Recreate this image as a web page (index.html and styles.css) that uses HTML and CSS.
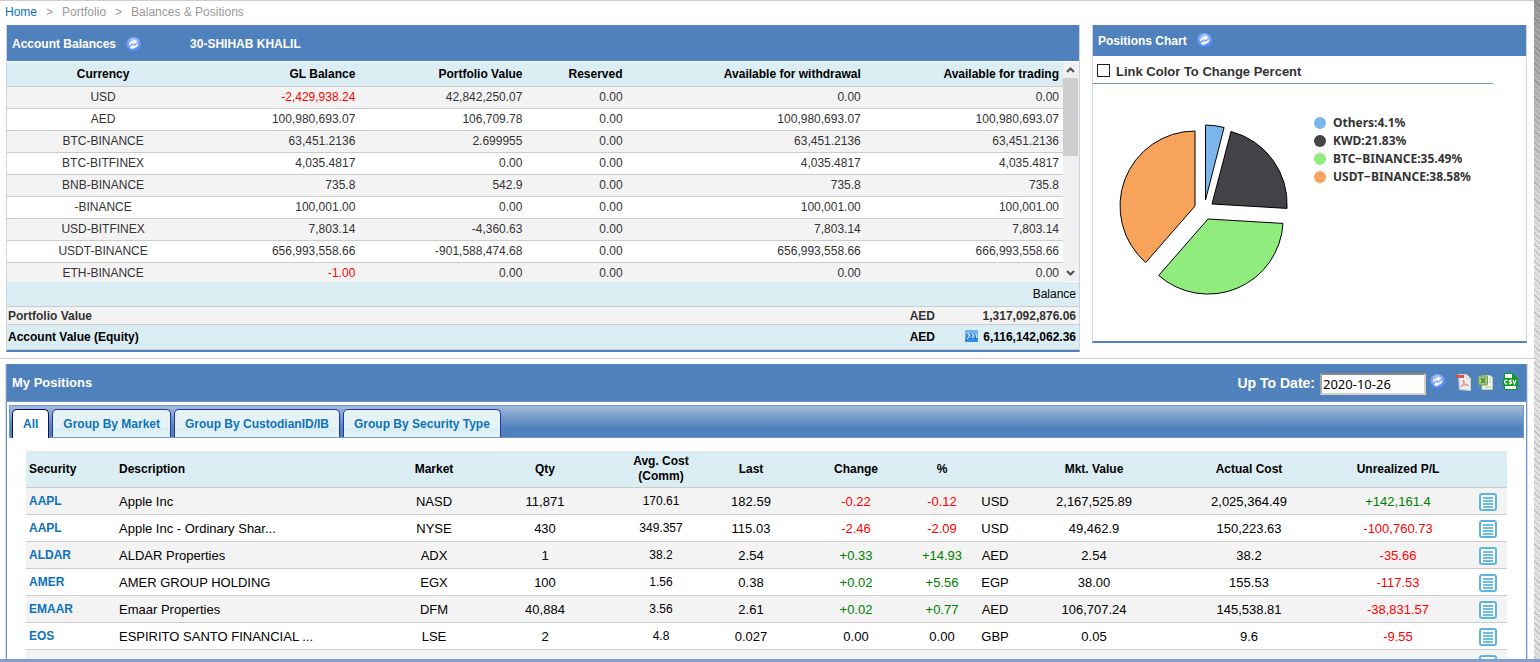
FILE: index.html
```html
<!DOCTYPE html>
<html lang="en">

<head>
    <meta charset="UTF-8">
    <meta name="viewport" content="width=device-width, initial-scale=1.0">
    <title>Balances &amp; Positions</title>

    <link rel="stylesheet" href="styles.css">
</head>

<body>
    <!-- shared icons -->
    <svg class="sprite" width="0" height="0" aria-hidden="true">
        <defs>
            <radialGradient id="ball" cx="0.5" cy="0.25" r="0.8">
                <stop offset="0" stop-color="#b5caff" />
                <stop offset="0.5" stop-color="#7fa4f6" />
                <stop offset="1" stop-color="#3f75ee" />
            </radialGradient>
            <symbol id="refresh" viewBox="0 0 15 15">
                <circle cx="7.5" cy="7.5" r="7.3" fill="url(#ball)" />
                <g transform="rotate(-22 7.5 7.5)" fill="#fff">
                    <path d="M2.800 7.200C3.200 4.400 6 3.400 8.800 4.200L9.400 2.800L12.400 6L8.200 7.400L8.500 6.200C6.500 5.600 4.600 5.800 2.800 7.200Z" />
                    <path d="M12.200 7.800C11.800 10.600 9 11.600 6.200 10.800L5.600 12.200L2.600 9L6.800 7.600L6.500 8.800C8.500 9.400 10.400 9.200 12.200 7.800Z" />
                </g>
            </symbol>
            <symbol id="list" viewBox="0 0 18 18">
                <rect x="1" y="1" width="16" height="16" rx="2" fill="#fff" stroke="#5bb5e0" stroke-width="2" />
                <path d="M4 5h10M4 8h10M4 11h10M4 14h10" stroke="#3fa9d8" stroke-width="1.300" />
            </symbol>
        </defs>
    </svg>

    <div class="page">
        <nav class="breadcrumb">
            <a href="#">Home</a><i>&gt;</i><span>Portfolio</span><i>&gt;</i><span>Balances &amp; Positions</span>
        </nav>

        <div class="top">
            <div class="panel balances">
                <div class="title">
                    <b>Account Balances</b>
                    <button class="icon" aria-label="Refresh balances"><svg width="15" height="15"><use href="#refresh" /></svg></button>
                    <b class="account">30-SHIHAB KHALIL</b>
                </div>
                <div class="scroller">
                    <table class="grid">
                        <colgroup>
                            <col class="cur"><col class="gl"><col class="pv"><col class="res"><col class="wd"><col class="tr">
                        </colgroup>
                        <thead>
                            <tr><th>Currency</th><th>GL Balance</th><th>Portfolio Value</th><th>Reserved</th><th>Available for withdrawal</th><th>Available for trading</th></tr>
                        </thead>
                        <tbody>
                            <tr><td>USD</td><td class="red">-2,429,938.24</td><td>42,842,250.07</td><td>0.00</td><td>0.00</td><td>0.00</td></tr>
                            <tr><td>AED</td><td>100,980,693.07</td><td>106,709.78</td><td>0.00</td><td>100,980,693.07</td><td>100,980,693.07</td></tr>
                            <tr><td>BTC-BINANCE</td><td>63,451.2136</td><td>2.699955</td><td>0.00</td><td>63,451.2136</td><td>63,451.2136</td></tr>
                            <tr><td>BTC-BITFINEX</td><td>4,035.4817</td><td>0.00</td><td>0.00</td><td>4,035.4817</td><td>4,035.4817</td></tr>
                            <tr><td>BNB-BINANCE</td><td>735.8</td><td>542.9</td><td>0.00</td><td>735.8</td><td>735.8</td></tr>
                            <tr><td>-BINANCE</td><td>100,001.00</td><td>0.00</td><td>0.00</td><td>100,001.00</td><td>100,001.00</td></tr>
                            <tr><td>USD-BITFINEX</td><td>7,803.14</td><td>-4,360.63</td><td>0.00</td><td>7,803.14</td><td>7,803.14</td></tr>
                            <tr><td>USDT-BINANCE</td><td>656,993,558.66</td><td>-901,588,474.68</td><td>0.00</td><td>656,993,558.66</td><td>666,993,558.66</td></tr>
                            <tr><td>ETH-BINANCE</td><td class="red">-1.00</td><td>0.00</td><td>0.00</td><td>0.00</td><td>0.00</td></tr>
                        </tbody>
                    </table>
                    <div class="scrollbar">
                        <svg width="15" height="16"><path d="M4 10l3.500-3.500L11 10" /></svg>
                        <div class="thumb"></div>
                        <svg width="15" height="16"><path d="M4 6l3.500 3.500L11 6" /></svg>
                    </div>
                </div>
                <table class="totals">
                    <thead>
                        <tr><th></th><th></th><th>Balance</th></tr>
                    </thead>
                    <tbody>
                        <tr><td>Portfolio Value</td><td>AED</td><td>1,317,092,876.06</td></tr>
                        <tr class="equity">
                            <td>Account Value (Equity)</td>
                            <td>AED</td>
                            <td>
                                <svg width="13" height="12" viewBox="0 0 13 12">
                                    <rect width="13" height="12" rx="1" fill="#6db4ee" />
                                    <rect y="8" width="13" height="4" rx="1" fill="#2f8be6" />
                                    <path d="M1 4l2 2-2 2M5 4l2 2-2 3M9 4l2 2-1 3" fill="none" stroke="#1e5fc4" />
                                    <path d="M3 3l2 3M7 8l2-4M11 4l1 4M2 9l2-2" stroke="#d4ecff" />
                                </svg>
                                6,116,142,062.36
                            </td>
                        </tr>
                    </tbody>
                </table>
            </div>

            <div class="panel chart">
                <div class="title">
                    <b>Positions Chart</b>
                    <button class="icon" aria-label="Refresh chart"><svg width="15" height="15"><use href="#refresh" /></svg></button>
                </div>
                <div class="option">
                    <input type="checkbox" id="linkColor">
                    <label for="linkColor">Link Color To Change Percent</label>
                </div>
                <div class="plot">
                    <svg width="180" height="180" viewBox="1113 119 180 180" stroke="#000" stroke-linejoin="round">
                        <path d="M1205.500 200V125A75 75 0 0 1 1224.100 127.500Z" fill="#7cb5ec" />
                        <path d="M1212 204L1231 131.500A75 75 0 0 1 1287 208.400Z" fill="#434348" />
                        <path d="M1208 219L1283 223.400A75 75 0 0 1 1158.700 275.500Z" fill="#90ed7d" />
                        <path d="M1195 206L1145.700 262.500A75 75 0 0 1 1195 131Z" fill="#f7a35c" />
                    </svg>
                    <ul class="legend">
                        <li class="others">Others:4.1%</li>
                        <li class="kwd">KWD:21.83%</li>
                        <li class="btc">BTC−BINANCE:35.49%</li>
                        <li class="usdt">USDT−BINANCE:38.58%</li>
                    </ul>
                </div>
            </div>
        </div>

        <div class="positions">
            <div class="bar">
                <h2>My Positions</h2>
                <label for="date">Up To Date:</label>
                <input type="text" id="date" value="2020-10-26">
                <button class="icon" aria-label="Refresh positions"><svg width="15" height="15"><use href="#refresh" /></svg></button>
                <button class="icon pdf" aria-label="Export PDF">
                    <svg width="16" height="18" viewBox="0 0 16 18">
                        <path d="M2.500 1.500h8l4 4v12l-11-1z" fill="#ececec" stroke="#cfcfcf" />
                        <path d="M10.500 1.500v4h4" fill="#fff" stroke="#ccc" />
                        <rect y="2" width="8" height="3" fill="#d9534c" />
                        <path d="M4.500 14C8 11 9 7.500 7.500 7S8 12 12.500 12.500C10 11 6 12 4.500 14Z" fill="none" stroke="#e08a86" />
                    </svg>
                </button>
                <button class="icon" aria-label="Export Excel">
                    <svg width="16" height="16" viewBox="0 0 16 16">
                        <path d="M4 1.500h8l2.500 2v12H4z" fill="#f4f6ee" stroke="#c3cbb4" />
                        <path d="M7 13h6M11 5h2M11 8h2" stroke="#a9c48e" />
                        <rect x="0.5" y="2" width="9" height="9" rx="1" fill="#a5c98a" stroke="#6ca34a" />
                        <path d="M3 4l4 5M7 4l-4 5" stroke="#4d8c2f" stroke-width="1.600" />
                    </svg>
                </button>
                <button class="icon csv" aria-label="Export CSV">
                    <svg width="15" height="17" viewBox="0 0 15 17">
                        <path d="M1.500 0.500h8l4 4v12h-12z" fill="#fff" stroke="#0a9a1e" />
                        <path d="M9 0v5h5z" fill="#0a9a1e" />
                        <rect y="5" width="15" height="8" rx="1" fill="#0a9a1e" />
                        <path d="M4.500 7.300Q1.500 6.500 1.700 9T4.500 10.800M8.800 7.300Q6 6.800 6.300 8.500Q9 9 8.500 10.300Q7.500 11.200 6 10.500M10 7l1.500 4L13 7" fill="none" stroke="#fff" stroke-width="1.300" />
                    </svg>
                </button>
            </div>
            <div class="tabs">
                <a href="#" class="active">All</a>
                <a href="#">Group By Market</a>
                <a href="#">Group By CustodianID/IB</a>
                <a href="#">Group By Security Type</a>
            </div>
            <table class="holdings">
                <colgroup>
                    <col class="sec"><col class="desc"><col class="mkt"><col class="qty"><col class="avg"><col class="last"><col class="chg"><col class="pct"><col class="ccy"><col class="val"><col class="cost"><col class="pl"><col class="act">
                </colgroup>
                <thead>
                    <tr><th>Security</th><th>Description</th><th>Market</th><th>Qty</th><th>Avg. Cost<br>(Comm)</th><th>Last</th><th>Change</th><th>%</th><th></th><th>Mkt. Value</th><th>Actual Cost</th><th>Unrealized P/L</th><th></th></tr>
                </thead>
                <tbody>
                    <tr><td><a href="#">AAPL</a></td><td>Apple Inc</td><td>NASD</td><td>11,871</td><td>170.61</td><td>182.59</td><td class="red">-0.22</td><td class="red">-0.12</td><td>USD</td><td>2,167,525.89</td><td>2,025,364.49</td><td class="green">+142,161.4</td><td><button class="icon" aria-label="Details"><svg width="18" height="18"><use href="#list" /></svg></button></td></tr>
                    <tr><td><a href="#">AAPL</a></td><td>Apple Inc - Ordinary Shar...</td><td>NYSE</td><td>430</td><td>349.357</td><td>115.03</td><td class="red">-2.46</td><td class="red">-2.09</td><td>USD</td><td>49,462.9</td><td>150,223.63</td><td class="red">-100,760.73</td><td><button class="icon" aria-label="Details"><svg width="18" height="18"><use href="#list" /></svg></button></td></tr>
                    <tr><td><a href="#">ALDAR</a></td><td>ALDAR Properties</td><td>ADX</td><td>1</td><td>38.2</td><td>2.54</td><td class="green">+0.33</td><td class="green">+14.93</td><td>AED</td><td>2.54</td><td>38.2</td><td class="red">-35.66</td><td><button class="icon" aria-label="Details"><svg width="18" height="18"><use href="#list" /></svg></button></td></tr>
                    <tr><td><a href="#">AMER</a></td><td>AMER GROUP HOLDING</td><td>EGX</td><td>100</td><td>1.56</td><td>0.38</td><td class="green">+0.02</td><td class="green">+5.56</td><td>EGP</td><td>38.00</td><td>155.53</td><td class="red">-117.53</td><td><button class="icon" aria-label="Details"><svg width="18" height="18"><use href="#list" /></svg></button></td></tr>
                    <tr><td><a href="#">EMAAR</a></td><td>Emaar Properties</td><td>DFM</td><td>40,884</td><td>3.56</td><td>2.61</td><td class="green">+0.02</td><td class="green">+0.77</td><td>AED</td><td>106,707.24</td><td>145,538.81</td><td class="red">-38,831.57</td><td><button class="icon" aria-label="Details"><svg width="18" height="18"><use href="#list" /></svg></button></td></tr>
                    <tr><td><a href="#">EOS</a></td><td>ESPIRITO SANTO FINANCIAL ...</td><td>LSE</td><td>2</td><td>4.8</td><td>0.027</td><td>0.00</td><td>0.00</td><td>GBP</td><td>0.05</td><td>9.6</td><td class="red">-9.55</td><td><button class="icon" aria-label="Details"><svg width="18" height="18"><use href="#list" /></svg></button></td></tr>
                    <tr><td></td><td></td><td></td><td></td><td></td><td></td><td></td><td></td><td></td><td></td><td></td><td></td><td><button class="icon" aria-label="Details"><svg width="18" height="18"><use href="#list" /></svg></button></td></tr>
                </tbody>
            </table>
        </div>
    </div>
    <div class="footer"></div>
</body>

</html>
```
FILE: styles.css
```css
* {
    box-sizing: border-box;
}

body {
    margin: 0;
    height: 100vh;
    display: flex;
    flex-direction: column;
    overflow: hidden;
    font-family: "Liberation Sans", Arial, sans-serif;
    font-size: 12px;
    color: #333;
    background: repeating-linear-gradient(45deg, rgba(0, 0, 0, 0.15) 0 1px, transparent 1px 4px),
        linear-gradient(#9a9a9c, #e2e2e2 240px);
}

a {
    color: #0d72b9;
    text-decoration: none;
}

table {
    width: 100%;
    border-collapse: separate;
    border-spacing: 0;
}

.sprite {
    position: absolute;
}

.page {
    flex: 1;
    min-height: 0;
    overflow: hidden;
    margin-right: 6px;
    background: #fff;
    border-top: 1px solid #ccc;
}

.footer {
    height: 3px;
    background: #7e9fcf;
}

.icon {
    display: block;
    padding: 0;
    border: 0;
    background: none;
    cursor: pointer;
}

.icon svg {
    display: block;
}

.red {
    color: #f00;
}

.green {
    color: #008000;
}

.breadcrumb {
    height: 24px;
    padding-left: 5px;
    line-height: 22px;
    color: #999;
}

.breadcrumb i {
    margin: 0 9px;
    font-style: normal;
}

/* top row */
.top {
    display: grid;
    grid-template-columns: 1074fr 435fr;
    gap: 12px;
    align-items: start;
    padding: 0 7px 6px 6px;
    border-bottom: 1px solid #ccc;
}

.panel {
    border: 1px solid #ccd3e2;
    border-top: 0;
    border-bottom: 2px solid #4f81bc;
}

.title {
    display: flex;
    align-items: center;
    height: 31px;
    padding-left: 5px;
    color: #fff;
    background: #4f81bc;
}

.title .icon {
    margin-left: 10px;
}

.balances .title {
    height: 36px;
    padding-top: 2px;
}

.account {
    margin-left: 49px;
}

.scroller {
    display: flex;
    height: 221px;
    padding: 1px 0;
    overflow: hidden;
}

.grid {
    flex: 1;
    table-layout: fixed;
}

.cur { width: 192px; }
.gl { width: 160px; }
.pv { width: 167px; }
.res { width: 100px; }
.wd { width: 238px; }
.tr { width: 198px; }

.grid th,
.grid td {
    height: 22px;
    padding: 0 4px 1px 0;
    text-align: right;
    border-bottom: 1px solid #ccc;
}

.grid th {
    height: 25px;
    color: #000;
    background: #daedf3;
}

.grid th:first-child,
.grid td:first-child {
    padding-right: 0;
    text-align: center;
}

.grid tbody tr:nth-child(odd) {
    background: #f3f3f3;
}

.scrollbar {
    display: flex;
    flex-direction: column;
    width: 16px;
    padding-right: 1px;
    background: #f0f0f0;
}

.scrollbar path {
    fill: none;
    stroke: #505050;
    stroke-width: 2;
}

.thumb {
    height: 78px;
    margin-bottom: auto;
    background: #cdcdcd;
}

.totals th,
.totals td {
    padding: 0 3px 0 1px;
    height: 25px;
    border-bottom: 1px solid #ccc;
    background: #daedf3;
    color: #000;
    text-align: right;
}

.totals th {
    font-weight: normal;
}

.totals td {
    font-weight: bold;
}

.totals tr:first-child td {
    height: 18px;
    color: #333;
    background: #f3f3f3;
}

.totals td:first-child {
    text-align: left;
}

.totals th:last-child {
    width: 141px;
}

.totals svg {
    margin-right: 2px;
    vertical-align: -1px;
}

/* chart */
.option {
    display: flex;
    align-items: center;
    height: 28px;
    width: 400px;
    max-width: 100%;
    padding: 1px 0 0 4px;
    border-bottom: 1px solid #7496c6;
    font-size: 13px;
    font-weight: bold;
}

.option input {
    appearance: none;
    width: 13px;
    height: 13px;
    margin: 0 6px 0 0;
    border: 1px solid #222;
    background: #fff;
}

.option label {
    padding-top: 2px;
}

.plot {
    display: flex;
    height: 257px;
    padding: 30px 0 0 20px;
}

.plot svg {
    margin-top: 5px;
}

.legend {
    margin: 0 0 0 21px;
    padding: 0;
    list-style: none;
    font: bold 12px/18px "Noto Sans", "Lucida Grande", sans-serif;
}

.legend li {
    display: flex;
    align-items: center;
    gap: 7px;
}

.legend li::before {
    content: "";
    width: 12px;
    height: 12px;
    border-radius: 50%;
    background: #7cb5ec;
}

.legend .kwd::before { background: #434348; }
.legend .btc::before { background: #90ed7d; }
.legend .usdt::before { background: #f7a35c; }

/* positions */
.positions {
    height: 600px;
    margin: 5px 7px 0 6px;
    border: 1px solid #7496c6;
    border-width: 0 1px;
    box-shadow: -1px 0 #d5dced, 1px 0 #d5dced;
}

.bar {
    display: flex;
    align-items: center;
    height: 38px;
    padding-right: 8px;
    color: #fff;
    background: #4f81bc;
    border-bottom: 1px solid #7496c6;
}

.bar h2 {
    flex: 1;
    margin: 0 0 0 5px;
    font-size: 13px;
}

.bar label {
    font-size: 14px;
    font-weight: bold;
}

.bar input {
    width: 106px;
    height: 22px;
    margin: 2px 4px 0 5px;
    padding: 0 1px;
    border: 2px solid #d4d0c8;
    border-top-color: #8c8984;
    border-left-color: #a8a49c;
    background: #fff;
    color: #000;
    font: 13px "Noto Sans", Tahoma, sans-serif;
}

.bar .icon {
    margin-bottom: 2px;
}

.bar .pdf {
    margin: 0 6px 2px 11px;
}

.bar .csv {
    margin-left: 9px;
}

.tabs {
    display: flex;
    gap: 3px;
    height: 33px;
    margin: 3px 2px 13px;
    padding: 3px 2px 0;
    border: 1px solid #7496c6;
    background: linear-gradient(#a3bbdb, #4f81bc 70%);
}

.tabs a {
    padding: 0 10px;
    border: 1px solid #2a35a5;
    border-bottom: 0;
    border-radius: 5px 5px 0 0;
    line-height: 28px;
    font-weight: bold;
    background: linear-gradient(#e5f2f6 65%, #d6ecf2 66%, #e8f5f8);
}

.tabs .active {
    margin-bottom: -1px;
    border-color: #0b1056;
    background: #fff;
}

.holdings {
    width: calc(100% - 38px);
    margin: 0 19px;
    table-layout: fixed;
    color: #000;
}

.sec { width: 90px; }
.desc { width: 278px; }
.mkt { width: 80px; }
.qty { width: 142px; }
.avg { width: 90px; }
.last { width: 90px; }
.chg { width: 120px; }
.pct { width: 52px; }
.ccy { width: 54px; }
.val { width: 144px; }
.cost { width: 166px; }
.pl { width: 132px; }
.act { width: 43px; }

.holdings th {
    height: 37px;
    padding: 0;
    line-height: 15px;
    background: #daedf3;
    border-bottom: 1px solid #ccc;
}

.holdings td {
    height: 27px;
    padding: 0;
    font-size: 13px;
    text-align: center;
    border-bottom: 1px solid #ccc;
}

.holdings tr > :nth-child(1),
.holdings tr > :nth-child(2) {
    padding-left: 3px;
    text-align: left;
}

.holdings td:nth-child(1),
.holdings td:nth-child(5) {
    font-size: 12px;
}

.holdings td a {
    font-weight: bold;
}

.holdings td .icon {
    margin: 1px 10px 0 auto;
}

.holdings tbody tr:nth-child(odd) {
    background: #f3f3f3;
}
```
